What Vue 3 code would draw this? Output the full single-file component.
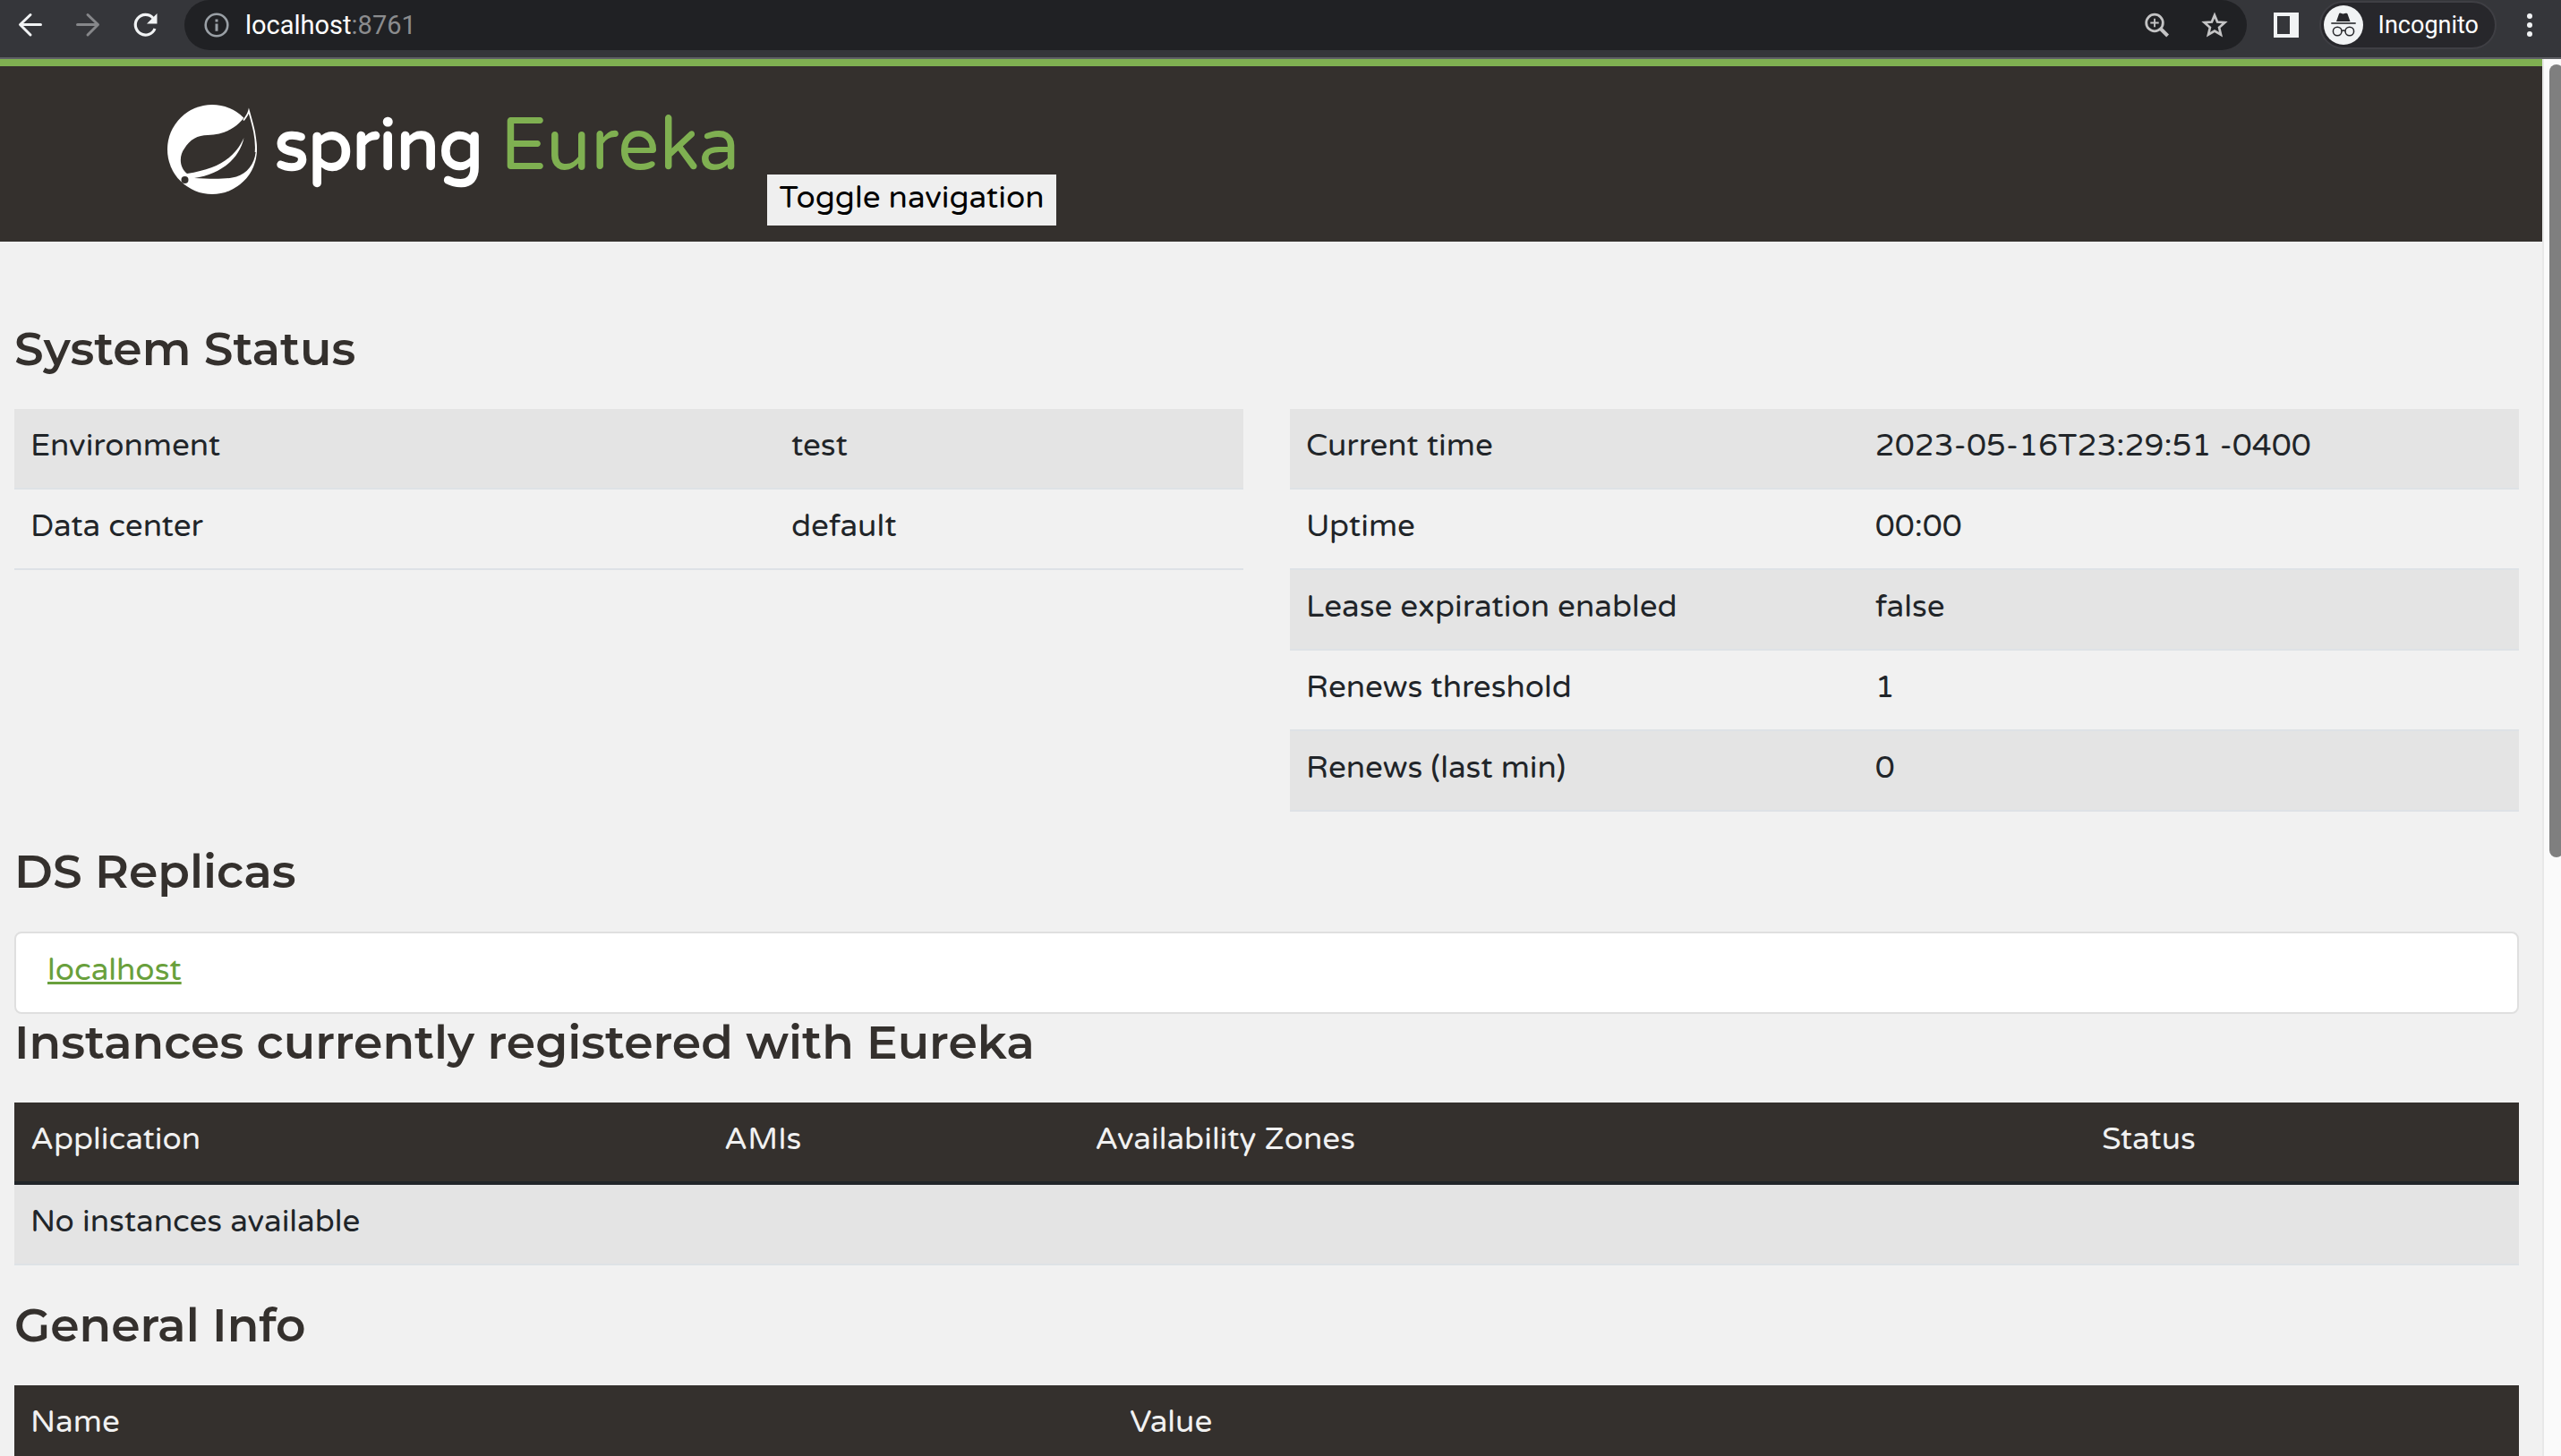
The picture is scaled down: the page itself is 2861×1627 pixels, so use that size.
<script setup>
const environment = [
  ['Environment', 'test'],
  ['Data center', 'default'],
]

const runtime = [
  ['Current time', '2023-05-16T23:29:51 -0400'],
  ['Uptime', '00:00'],
  ['Lease expiration enabled', 'false'],
  ['Renews threshold', '1'],
  ['Renews (last min)', '0'],
]

const replicas = ['localhost']
</script>

<template>
  <div class="browser">
    <header class="toolbar">
      <nav class="group" aria-label="History">
        <button class="tool" type="button" aria-label="Back">
          <svg width="28" height="28" viewBox="0 0 28 28" fill="none" stroke="#f1f3f4" stroke-width="3" stroke-linecap="round" stroke-linejoin="round"><path d="M25.5 13.5H3M14 2.500L2.500 13.500L14 25" /></svg>
        </button>
        <button class="tool" type="button" aria-label="Forward" disabled>
          <svg width="28" height="28" viewBox="0 0 28 28" fill="none" stroke="#86878a" stroke-width="3" stroke-linecap="round" stroke-linejoin="round"><path d="M2.500 13.500H25M14 2.500L25.500 13.500L14 25" /></svg>
        </button>
        <button class="tool" type="button" aria-label="Reload">
          <svg width="28" height="28" viewBox="0 0 28 28"><path d="M23 6.200A11.300 11.300 0 1 0 25 18" fill="none" stroke="#f1f3f4" stroke-width="3.200" /><path d="M27.500 1V12.500H16Z" fill="#f1f3f4" /></svg>
        </button>
      </nav>

      <div class="address">
        <button class="tool" type="button" aria-label="Site information">
          <svg width="28" height="28" viewBox="0 0 28 28"><circle cx="14" cy="14" r="12.300" fill="none" stroke="#9aa0a6" stroke-width="2.600" /><path d="M12.500 7.500h3v3h-3zM12.500 12.600h3v8.200h-3z" fill="#9aa0a6" /></svg>
        </button>
        <div class="url" role="textbox" aria-label="Address">localhost<span class="port">:8761</span></div>
        <button class="tool" type="button" aria-label="Zoom">
          <svg width="28" height="28" viewBox="0 0 28 28" fill="none" stroke="#c4c4c5"><circle cx="11" cy="11.500" r="9.300" stroke-width="2.800" /><path d="M11 6.800v9.400M6.300 11.500h9.400" stroke-width="1.800" /><path d="M17.600 18L25.600 26" stroke-width="4" /></svg>
        </button>
        <button class="tool" type="button" aria-label="Bookmark">
          <svg width="30" height="30" viewBox="0 0 30 30" fill="none" stroke="#c4c4c5" stroke-width="2.700"><path d="M15 4L18.100 11.500L26.400 12.200L20.100 17.700L22 25.700L15 21.500L8 25.700L9.900 17.700L3.600 12.200L11.900 11.500Z" /></svg>
        </button>
      </div>

      <div class="group">
        <button class="tool" type="button" aria-label="Side panel">
          <svg width="28" height="28" viewBox="0 0 28 28"><path d="M0 0H28V28H0ZM4 4V24H18V4Z" fill="#f1f3f4" fill-rule="evenodd" /></svg>
        </button>
        <button class="profile" type="button">
          <svg width="44" height="44" viewBox="0 0 44 44">
            <circle cx="22" cy="22" r="22" fill="#f1f3f4" />
            <path d="M14 18L17 9.500Q17.600 8.200 19 8.800L21.500 9.600L24.500 8.800Q26 8.300 26.500 9.500L29.500 18Z" fill="#27272b" />
            <path d="M8.300 20H35.700" stroke="#27272b" stroke-width="1.600" />
            <g fill="none" stroke="#27272b" stroke-width="1.500"><circle cx="15.200" cy="29" r="4.800" /><circle cx="28.800" cy="29" r="4.800" /><path d="M20 28.600Q22 27.400 24 28.600" /></g>
          </svg>
          Incognito
        </button>
        <button class="tool" type="button" aria-label="Menu">
          <svg width="6" height="26" viewBox="0 0 6 26" fill="#f1f3f4"><circle cx="3" cy="3" r="3" /><circle cx="3" cy="13" r="3" /><circle cx="3" cy="23" r="3" /></svg>
        </button>
      </div>
    </header>

    <div class="viewport">
      <div class="page">
        <header class="masthead">
          <a class="brand" href="#" aria-label="Spring Eureka">
            <svg width="100" height="100" viewBox="0 0 100 100">
              <circle cx="50" cy="50" r="50" fill="#fff" />
              <path d="M91 6C94 20 100 36 98.600 53C97.500 66 89 77 77 80.500C66 83.500 48 83 30 82C58 78 80 62 85.500 37C75 60 56 72 22 77C13 70 13 57 19 49C25 39 34 34 45 34C65 33 80 26 91 6Z" fill="#34302d" />
              <path d="M85 17.500Q90 11 91 7C95 21 100 37 98.600 53" fill="none" stroke="#fff" stroke-width="1.800" />
              <circle cx="19.500" cy="84" r="4" fill="#34302d" />
            </svg>
            <span class="wordmark">
              <span class="spring">spring</span>
              <span class="eureka">Eureka</span>
            </span>
          </a>
          <button class="toggle" type="button">Toggle navigation</button>
        </header>

        <main class="content">
          <h1>System Status</h1>
          <div class="columns">
            <table class="data environment">
              <tbody>
                <tr v-for="[name, value] in environment" :key="name">
                  <td>{{ name }}</td>
                  <td>{{ value }}</td>
                </tr>
              </tbody>
            </table>
            <table class="data runtime">
              <tbody>
                <tr v-for="[name, value] in runtime" :key="name">
                  <td>{{ name }}</td>
                  <td>{{ value }}</td>
                </tr>
              </tbody>
            </table>
          </div>

          <h1>DS Replicas</h1>
          <ul class="replicas">
            <li v-for="host in replicas" :key="host"><a href="#">{{ host }}</a></li>
          </ul>

          <h1>Instances currently registered with Eureka</h1>
          <table class="data instances">
            <thead>
              <tr>
                <th>Application</th>
                <th>AMIs</th>
                <th>Availability Zones</th>
                <th>Status</th>
              </tr>
            </thead>
            <tbody>
              <tr>
                <td colspan="4">No instances available</td>
              </tr>
            </tbody>
          </table>

          <h1>General Info</h1>
          <table class="data general">
            <thead>
              <tr>
                <th>Name</th>
                <th>Value</th>
              </tr>
            </thead>
          </table>
        </main>
      </div>
      <div class="scrollbar"><div class="thumb"></div></div>
    </div>
  </div>
</template>

<style>
body {
  margin: 0;
  background: #f1f1f1;
}
</style>

<style scoped>
.browser {
  display: flex;
  flex-direction: column;
  height: 100vh;
  overflow: hidden;
  color: #212529;
  font-family: "Varela Round", Inter, sans-serif;
  font-size: 35px;
  line-height: 52px;
}

button {
  border: 0;
  padding: 0;
  background: none;
  font: inherit;
}

/* Browser toolbar */
.toolbar {
  display: flex;
  flex: none;
  gap: 12px;
  padding: 0 3px 8px 2px;
  border-bottom: 2px solid #5f6064;
  background: #35363a;
  font-family: Roboto, sans-serif;
}

.group {
  display: flex;
}

.tool {
  display: flex;
  align-items: center;
  justify-content: center;
  width: 64px;
  height: 56px;
}

.address {
  display: flex;
  flex: 1;
  align-items: center;
  padding: 0 4px;
  border-radius: 28px;
  background: #202124;
}

.url {
  flex: 1;
  color: #fff;
  font-size: 29px;
}

.port {
  color: #8b8c8e;
}

.profile {
  display: flex;
  align-items: center;
  gap: 17px;
  box-sizing: border-box;
  height: 54px;
  margin: 1px 5px;
  padding: 0 18px 0 3px;
  border: 2px solid #3f3f44;
  border-radius: 27px;
  background: #27272b;
  color: #fff;
  font-size: 27px;
}

/* Page and its scrollbar */
.viewport {
  display: flex;
  flex: 1;
  min-height: 0;
}

.page {
  flex: 1;
  overflow: hidden;
  background: #f1f1f1;
}

.scrollbar {
  box-sizing: border-box;
  width: 21px;
  padding: 6px 0 0 6px;
  overflow: hidden;
  border-left: 2px solid #e8e8e8;
  background: #fafafa;
}

.thumb {
  width: 16px;
  height: 57%;
  border-radius: 8px;
  background: #7f7f7f;
}

/* Masthead */
.masthead {
  display: flex;
  gap: 31px;
  padding: 0 187px;
  border-top: 8px solid #7fb051;
  background: #34302d;
}

.brand {
  display: flex;
  align-items: center;
  gap: 20px;
  padding: 43px 0 53px;
  color: #fff;
  text-decoration: none;
}

.wordmark {
  display: flex;
  align-items: baseline;
  gap: 19px;
  padding-bottom: 8px;
  line-height: 80px;
}

.spring {
  font-size: 78px;
  font-weight: 700;
}

.eureka {
  color: #7fb051;
  font-size: 82px;
}

.toggle {
  align-self: flex-end;
  margin-bottom: 18px;
  padding: 0 13px 5px;
  background: #efefef;
  color: #000;
}

/* Content */
.content {
  padding: 88px 26px 0 16px;
}

h1 {
  margin: 0 0 35px;
  color: #34302d;
  font-family: Montserrat, Inter, sans-serif;
  font-size: 52px;
  font-weight: 600;
  line-height: 64px;
}

.columns {
  display: grid;
  grid-template-columns: 1fr 1fr;
  align-items: start;
  gap: 52px;
}

.data {
  width: 100%;
  margin-bottom: 35px;
  border-spacing: 0;
  table-layout: fixed;
}

.data th,
.data td {
  box-sizing: border-box;
  padding: 15px 18px 21px;
  text-align: left;
}

.data th {
  border-bottom: 4px solid #212529;
  background: #34302d;
  color: #f1f1f1;
  font-weight: 500;
}

.data td {
  border-bottom: 2px solid #dee2e6;
}

.data tbody tr:nth-child(odd) td {
  background: #e4e4e4;
}

.environment td:first-child {
  width: 61.9%;
}

.runtime td:first-child {
  width: 46.3%;
}

.instances th:nth-child(1) {
  width: 27.7%;
}

.instances th:nth-child(2) {
  width: 14.8%;
}

.instances th:nth-child(3) {
  width: 40.2%;
}

.general th:first-child {
  width: 43.9%;
}

.replicas {
  margin: 0;
  padding: 0;
  border: 2px solid #dfdfdf;
  border-radius: 8px;
  background: #fff;
  list-style: none;
}

.replicas li {
  padding: 15px 35px 21px;
}

.replicas a {
  color: #69a03c;
  text-decoration: underline;
  text-decoration-thickness: 3px;
}
</style>
